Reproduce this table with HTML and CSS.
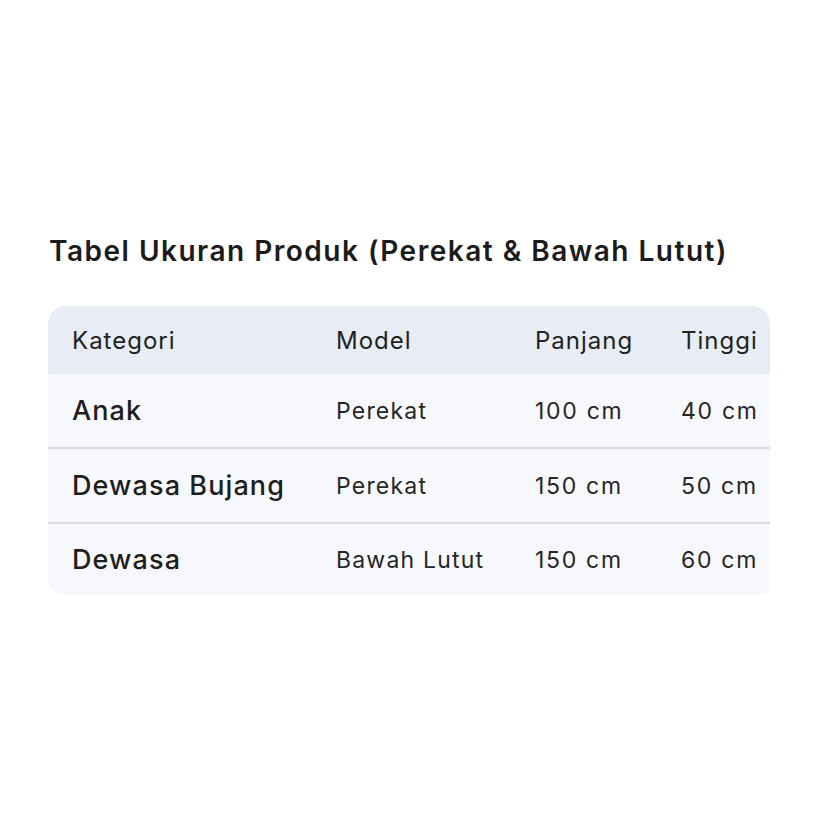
FILE: index.html
```html
<!DOCTYPE html>
<html lang="id">
<head>
<meta charset="utf-8">
<link rel="stylesheet" href="styles.css">
</head>
<body>
<main class="page">
  <h1 class="title">Tabel Ukuran Produk (Perekat &amp; Bawah Lutut)</h1>
  <div class="table">
    <div class="row head">
      <div class="cell">Kategori</div>
      <div class="cell">Model</div>
      <div class="cell">Panjang</div>
      <div class="cell">Tinggi</div>
    </div>
    <div class="row">
      <div class="cell cat">Anak</div>
      <div class="cell">Perekat</div>
      <div class="cell num">100 cm</div>
      <div class="cell num">40 cm</div>
    </div>
    <div class="row">
      <div class="cell cat">Dewasa Bujang</div>
      <div class="cell">Perekat</div>
      <div class="cell num">150 cm</div>
      <div class="cell num">50 cm</div>
    </div>
    <div class="row last">
      <div class="cell cat">Dewasa</div>
      <div class="cell">Bawah Lutut</div>
      <div class="cell num">150 cm</div>
      <div class="cell num">60 cm</div>
    </div>
  </div>
</main>
</body>
</html>
```

FILE: styles.css
```css
html, body {
  margin: 0;
  padding: 0;
  background: #ffffff;
}
body {
  font-family: Inter, "Noto Sans", sans-serif;
  color: #1f1f1f;
}
.page {
  padding: 228px 46px 0 48px;
}
.title {
  margin: 0 0 32px 1px;
  font-size: 28px;
  font-weight: 600;
  line-height: 46px;
  color: #1b1b1b;
  letter-spacing: 1.5px;
}
.table {
  width: 722px;
  border-radius: 18px 18px 6px 18px;
  overflow: hidden;
  background: #f7f8fc;
}
.row {
  display: grid;
  grid-template-columns: 264px 199px 146px 113px;
  align-items: center;
  height: 75px;
  box-sizing: border-box;
  border-bottom: 2px solid #d9dbe0;
  font-size: 23px;
  letter-spacing: 1.2px;
  color: #262626;
}
.row.head {
  height: 68px;
  background: #e8edf5;
  border-bottom: none;
  font-size: 24px;
  letter-spacing: 1px;
  color: #222;
}
.row.last {
  height: 71px;
  border-bottom: none;
}
.cell {
  padding-left: 24px;
  white-space: nowrap;
}
.cell.num {
  letter-spacing: 1.7px;
}
.cell.cat {
  font-size: 27px;
  font-weight: 500;
  letter-spacing: 1.1px;
  color: #1e1e1e;
}
```
